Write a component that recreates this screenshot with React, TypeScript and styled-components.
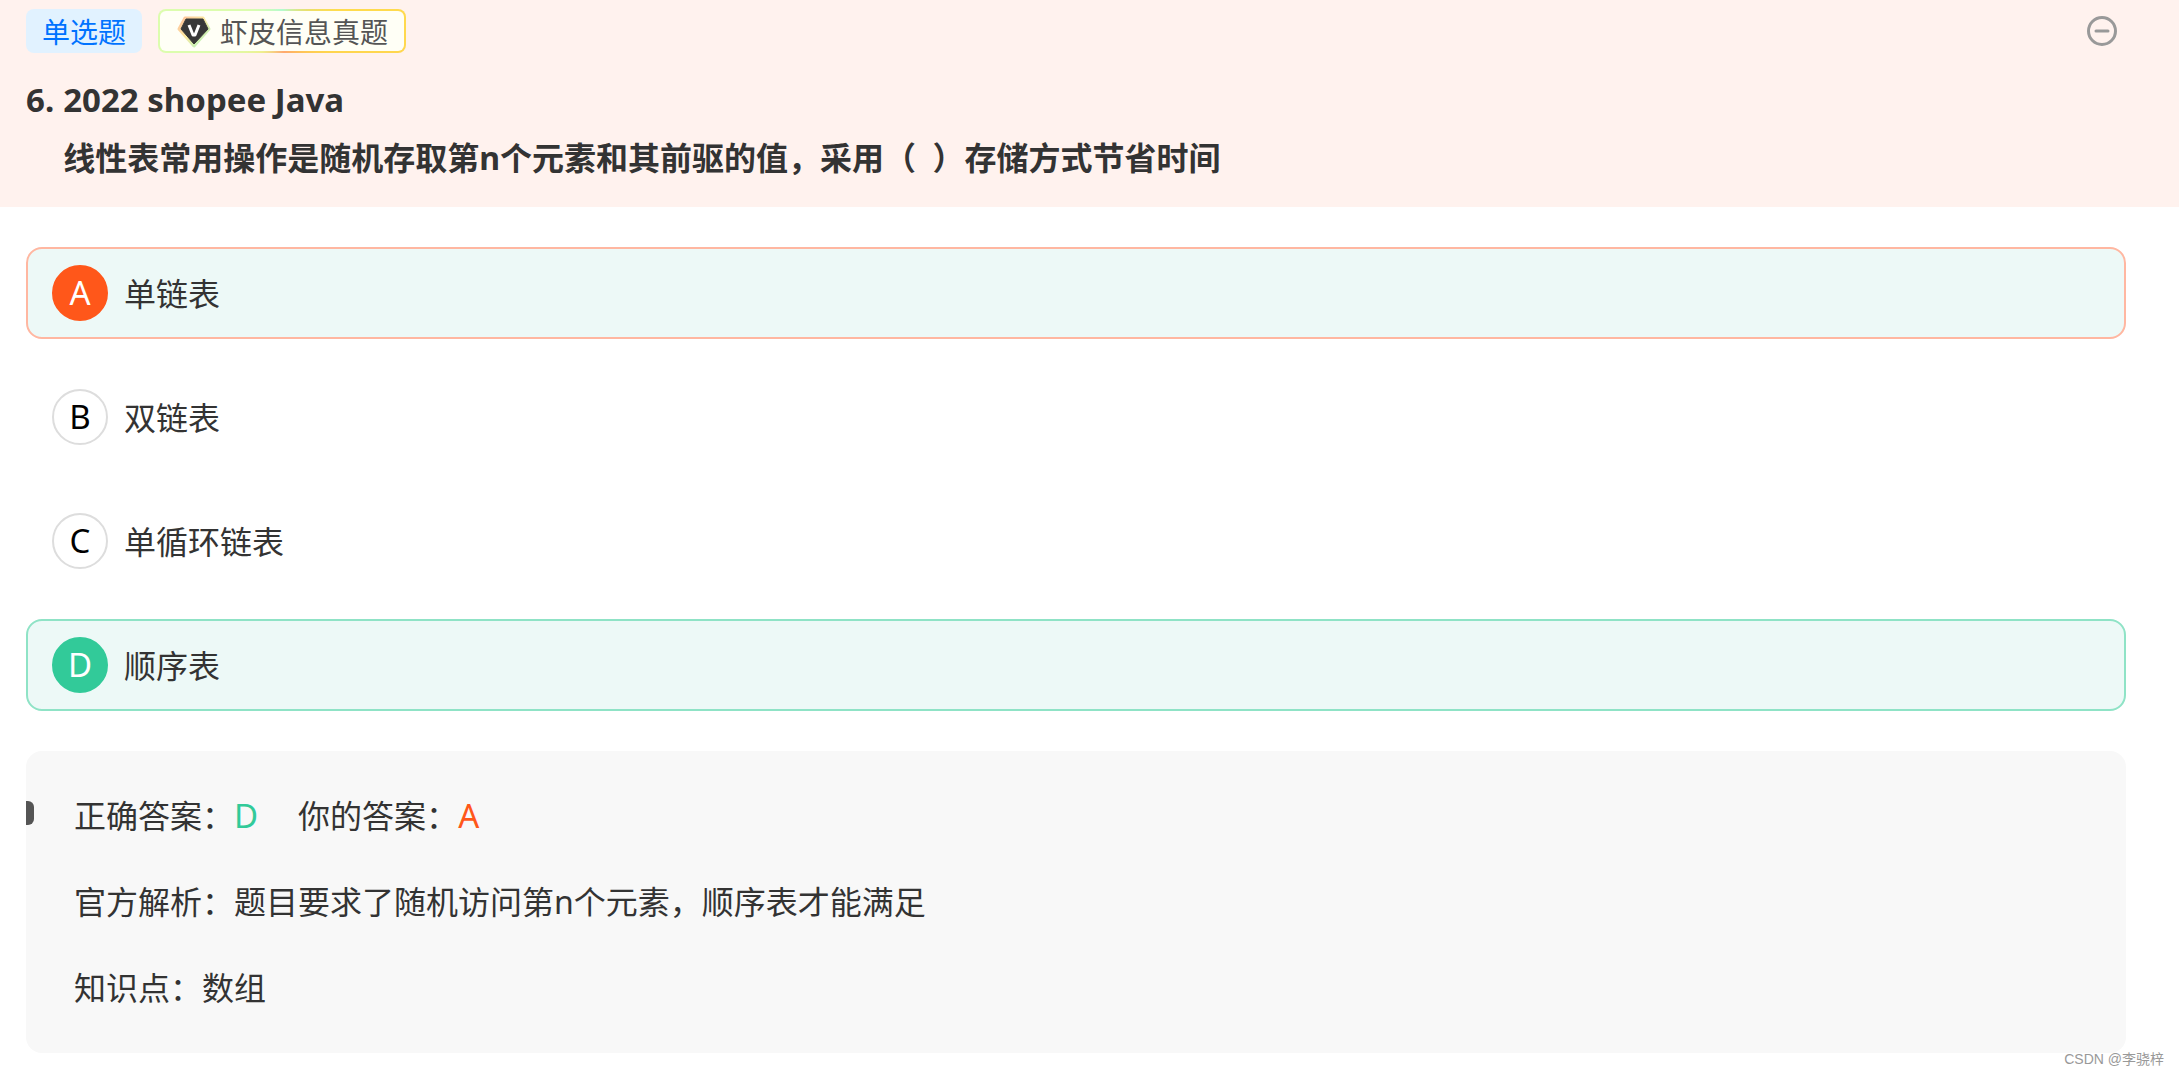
import React from "react";
import styled, { createGlobalStyle, css } from "styled-components";

const GlobalStyle = createGlobalStyle`
  * { box-sizing: border-box; }
  body {
    margin: 0;
    background: #fff;
    color: #333;
    font-family: "Noto Sans", "Noto Sans CJK SC", sans-serif;
    font-size: 32px;
    line-height: 48px;
  }
`;

const Page = styled.div`
  position: relative;
`;

const Header = styled.header`
  background: #fff2ee;
  padding: 9px 60px 20px 26px;
`;

const Toolbar = styled.div`
  display: flex;
  align-items: center;
  gap: 16px;
  height: 44px;
  margin-bottom: 18px;
`;

const Tag = styled.span`
  height: 44px;
  padding: 2px 16px 0;
  border-radius: 8px;
  background: #e1f2ff;
  color: #0073ff;
  font-size: 28px;
  line-height: 42px;
`;

const SourceTag = styled.a`
  display: flex;
  align-items: center;
  gap: 8px;
  height: 44px;
  padding: 0 16px;
  border: 2px solid transparent;
  border-radius: 8px;
  background:
    linear-gradient(#fffff6, #fffff6) padding-box,
    conic-gradient(#b4fbd0 0deg, #e8e070 50deg, #ffdc4e 70deg, #ffd44e 115deg, #ffb860 150deg, #ffa870 175deg, #eef090 225deg, #dcfdae 255deg, #dcfdae 300deg, #b4fbd0 360deg) border-box;
  color: #555;
  font-size: 28px;
  line-height: 42px;
  text-decoration: none;
`;

const SourceName = styled.span`
  padding-top: 2px;
`;

const CollapseButton = styled.button`
  display: flex;
  margin-left: auto;
  padding: 0;
  border: 0;
  background: none;
  color: #999;
  cursor: pointer;
`;

const Question = styled.h1`
  display: flex;
  gap: 9px;
  margin: 0;
  font-size: 33px;
  line-height: 58px;
  font-weight: 700;
`;

const QuestionText = styled.span`
  display: block;
`;

const QuestionBody = styled.span`
  display: block;
  font-size: 32px;
  white-space: pre-wrap;
`;

const Main = styled.main`
  display: flex;
  flex-direction: column;
  gap: 40px;
  padding: 40px 53px 22px 26px;
`;

const Options = styled.fieldset`
  display: flex;
  flex-direction: column;
  gap: 32px;
  min-width: 0;
  margin: 0;
  padding: 0;
  border: 0;
`;

type State = "wrong" | "right" | "plain";

const optionStates = {
  wrong: css`border-color: #ffb7a1; background: #edf9f7;`,
  right: css`border-color: #8fe3c6; background: #edf9f7;`,
  plain: css`border-color: transparent;`,
};

const letterStates = {
  wrong: css`border-color: #ff571a; background: #ff571a; color: #fff;`,
  right: css`border-color: #32ca99; background: #32ca99; color: #fff;`,
  plain: css`border-color: #ddd; background: #fff; color: #000;`,
};

const Option = styled.label<{ $state: State }>`
  position: relative;
  display: flex;
  align-items: center;
  gap: 16px;
  height: 92px;
  padding: 0 24px;
  border: 2px solid;
  border-radius: 16px;
  ${(p) => optionStates[p.$state]}
`;

const HiddenRadio = styled.input`
  position: absolute;
  opacity: 0;
  pointer-events: none;
`;

const Letter = styled.span<{ $state: State }>`
  display: flex;
  align-items: center;
  justify-content: center;
  width: 56px;
  height: 56px;
  border: 2px solid;
  border-radius: 50%;
  font-size: 33px;
  ${(p) => letterStates[p.$state]}
`;

const OptionText = styled.span`
  padding-top: 2px;
`;

const Analysis = styled.section`
  position: relative;
  display: flex;
  flex-direction: column;
  gap: 38px;
  padding: 41px 48px;
  border-radius: 16px;
  background: #f8f8f8;
`;

const Marker = styled.span`
  position: absolute;
  left: 0;
  top: 50px;
  width: 8px;
  height: 24px;
  border-radius: 0 6px 6px 0;
  background: #555;
`;

const Line = styled.p`
  display: flex;
  margin: 0;
`;

const Answer = styled.span<{ $right?: boolean }>`
  margin-right: 40px;
  font-size: 33px;
  color: ${(p) => (p.$right ? "#32ca99" : "#ff571a")};
`;

const Watermark = styled.footer`
  position: absolute;
  right: 15px;
  bottom: 6px;
  color: #999;
  font-family: "Liberation Sans", "Noto Sans CJK SC", sans-serif;
  font-size: 14px;
  line-height: 20px;
`;

const options: { letter: string; text: string; state: State }[] = [
  { letter: "A", text: "单链表", state: "wrong" },
  { letter: "B", text: "双链表", state: "plain" },
  { letter: "C", text: "单循环链表", state: "plain" },
  { letter: "D", text: "顺序表", state: "right" },
];

const Badge = () => (
  <svg width="36" height="36" viewBox="0 0 36 36" aria-hidden="true">
    <defs>
      <linearGradient id="glow" x1="0" y1="0" x2="1" y2="1">
        <stop offset="0" stopColor="#ffc09a" />
        <stop offset="0.45" stopColor="#fbe9a0" />
        <stop offset="1" stopColor="#a5f5c4" />
      </linearGradient>
    </defs>
    <path d="M9 5H27L33 16L18 33L3 16Z" fill="url(#glow)" stroke="url(#glow)" strokeWidth="3" strokeLinejoin="round" />
    <path d="M10 6H27L32 16L18 31L5 16Z" fill="#383838" stroke="#383838" strokeLinejoin="round" />
    <path d="M13 12L17 22H19L23 12" fill="none" stroke="#fff" strokeWidth="3" strokeLinejoin="round" />
  </svg>
);

export default function App() {
  return (
    <Page>
      <GlobalStyle />
      <Header>
        <Toolbar>
          <Tag>单选题</Tag>
          <SourceTag href="#">
            <Badge />
            <SourceName>虾皮信息真题</SourceName>
          </SourceTag>
          <CollapseButton type="button" aria-label="收起">
            <svg width="34" height="34" viewBox="0 0 34 34" fill="none" stroke="currentColor" strokeWidth="3" strokeLinecap="round">
              <circle cx="17" cy="17" r="13.500" />
              <path d="M11 17H23" />
            </svg>
          </CollapseButton>
        </Toolbar>
        <Question>
          <span>6.</span>
          <QuestionText>
            2022 shopee Java
            <QuestionBody>
              {"线性表常用操作是随机存取第n个元素和其前驱的值，采用（  ）存储方式节省时间"}
            </QuestionBody>
          </QuestionText>
        </Question>
      </Header>
      <Main>
        <Options aria-label="选项">
          {options.map((o) => (
            <Option key={o.letter} $state={o.state}>
              <HiddenRadio type="radio" name="answer" defaultChecked={o.state === "wrong"} />
              <Letter $state={o.state}>{o.letter}</Letter>
              <OptionText>{o.text}</OptionText>
            </Option>
          ))}
        </Options>
        <Analysis>
          <Marker />
          <Line>
            正确答案：<Answer $right>D</Answer>
            你的答案：<Answer>A</Answer>
          </Line>
          <Line>官方解析：题目要求了随机访问第n个元素，顺序表才能满足</Line>
          <Line>知识点：数组</Line>
        </Analysis>
      </Main>
      <Watermark>CSDN @李骁梓</Watermark>
    </Page>
  );
}
